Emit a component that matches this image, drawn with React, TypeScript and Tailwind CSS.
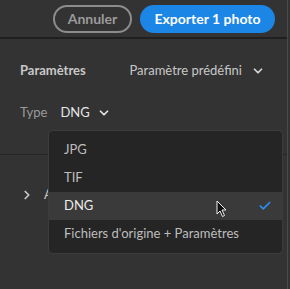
import React from 'react';
import { ChevronDown, ChevronRight, Check } from 'lucide-react';

const font = { fontFamily: 'Lato, "Noto Sans", sans-serif' };

const Cursor = () => (
  <svg width="12" height="18" viewBox="0 0 12 18" className="absolute left-[216px] top-[200px]">
    <path d="M1 1 L1 14 L4 11 L6.5 16.5 L8.5 15.5 L6 10 L10 10 Z" fill="#111" stroke="#eee" strokeWidth="1" strokeLinejoin="round" />
  </svg>
);

const options = ['JPG', 'TIF', 'DNG', "Fichiers d'origine + Paramètres"];

const App = () => {
  const selected = 'DNG';

  return (
    <div className="relative w-[290px] h-[289px] bg-[#333333] overflow-hidden" style={font}>
      <div className="flex flex-col h-full border-r border-[#4a4a4a] mr-[2px]">
        <div className="h-[39px] flex items-center justify-end gap-[8px] pr-[12px] border-b-[2px] border-[#1f1f1f]">
          <button className="h-[28px] w-[79px] rounded-full border-2 border-[#8c8c8c] text-[#9b9b9b] text-[14px] font-bold leading-none">
            Annuler
          </button>
          <button className="h-[28px] w-[135px] rounded-full bg-[#1c86e6] text-white text-[14px] font-bold leading-none">
            Exporter 1 photo
          </button>
        </div>

        <div className="flex items-center justify-between pl-[20px] pr-[22px] mt-[22px] h-[20px]">
          <span className="text-[13px] font-bold text-[#c8c8c8]">Paramètres</span>
          <span className="flex items-center gap-[9px] text-[13px] text-[#c8c8c8]">
            Paramètre prédéfini
            <ChevronDown size={14} strokeWidth={3} className="text-[#d8d8d8]" />
          </span>
        </div>

        <div className="flex items-center gap-[13px] pl-[20px] mt-[21px] h-[22px] text-[13px]">
          <span className="text-[#9a9a9a]">Type</span>
          <span className="flex items-center gap-[7px] text-[#e6e6e6]">
            DNG
            <ChevronDown size={14} strokeWidth={3} className="text-[#e6e6e6]" />
          </span>
        </div>

        <div className="mt-[30px] border-t border-[#262626]" />

        <div className="flex items-center gap-[10px] pl-[20px] mt-[30px] h-[20px] text-[13px] text-[#c8c8c8]">
          <ChevronRight size={14} strokeWidth={3} />
          <span>A</span>
        </div>
      </div>

      <div className="absolute left-[48px] top-[130px] w-[235px] rounded-[5px] border border-[#3c3c3c] bg-[#252525] py-[5px]">
        {options.map((o) => (
          <div
            key={o}
            className={`h-[28px] flex items-center justify-between pl-[15px] pr-[10px] text-[13px] ${
              o === selected ? 'bg-[#3a3a3a] text-[#ececec]' : 'text-[#bdbdbd]'
            }`}
          >
            <span>{o}</span>
            {o === selected && <Check size={14} strokeWidth={3} className="text-[#2b8df0]" />}
          </div>
        ))}
      </div>

      <Cursor />
    </div>
  );
};

export default App;
